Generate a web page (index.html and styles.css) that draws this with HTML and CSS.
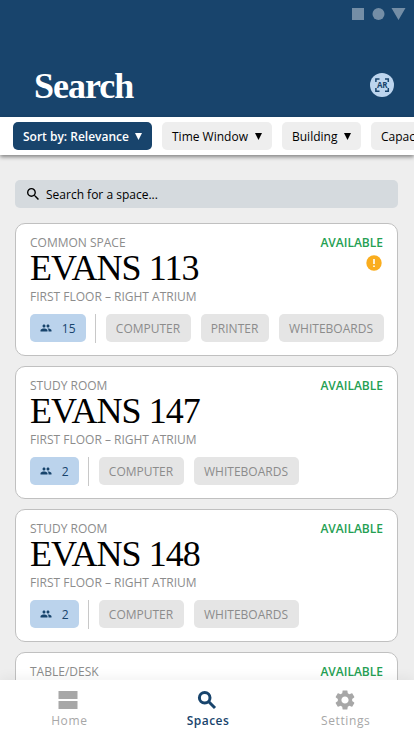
FILE: index.html
```html
<!DOCTYPE html>
<html lang="en">
<head>
<meta charset="utf-8">
<title>Search</title>
<link rel="stylesheet" href="styles.css">
</head>
<body>
<svg width="0" height="0" class="defs">
  <symbol id="people" viewBox="0 0 24 24"><path d="M16 11c1.660 0 3-1.340 3-3s-1.340-3-3-3-3 1.340-3 3 1.340 3 3 3zm-8 0c1.660 0 3-1.340 3-3S9.660 5 8 5 5 6.340 5 8s1.340 3 3 3zm0 2c-2.330 0-7 1.170-7 3.500V19h14v-2.500c0-2.330-4.670-3.500-7-3.500zm8 0c-.29 0-.62.02-.97.05 1.160.84 1.970 1.970 1.970 3.450V19h6v-2.500c0-2.330-4.670-3.500-7-3.500z"/></symbol>
  <symbol id="search" viewBox="3 3 17.500 17.500"><path d="M15.500 14h-.79l-.28-.27A6.471 6.471 0 0 0 16 9.500 6.500 6.500 0 1 0 9.500 16c1.610 0 3.090-.59 4.230-1.570l.27.28v.79l5 4.990L20.490 19l-4.990-5zm-6 0C7.010 14 5 11.990 5 9.500S7.010 5 9.500 5 14 7.010 14 9.500 11.990 14 9.500 14z"/></symbol>
</svg>
<div class="app">
  <header class="header">
    <svg class="status" viewBox="0 0 54 12"><path d="M0 0h12v12H0zM39.500 0h14l-7 12z"/><circle cx="26.500" cy="6" r="6"/></svg>
    <div class="title-row">
      <h1>Search</h1>
      <svg class="ar" viewBox="0 0 24 24"><circle class="ar-bg" cx="12" cy="12" r="12"/><path class="ar-frame" d="M5.900 9V5.900H9.500M15 5.900h3.300V9M5.900 15v3.200H9.500M15 18.200h3.300V15"/><text x="12.100" y="14.800" text-anchor="middle">AR</text></svg>
    </div>
  </header>
  <nav class="filters">
    <button class="filter active sort">Sort by: Relevance <svg viewBox="0 0 7 7"><path d="M0 0h7L3.500 7z"/></svg></button>
    <button class="filter time">Time Window <svg viewBox="0 0 7 7"><path d="M0 0h7L3.500 7z"/></svg></button>
    <button class="filter building">Building <svg viewBox="0 0 7 7"><path d="M0 0h7L3.500 7z"/></svg></button>
    <button class="filter capacity">Capacity <svg viewBox="0 0 7 7"><path d="M0 0h7L3.500 7z"/></svg></button>
  </nav>
  <main class="content">
    <div class="searchbar"><svg><use href="#search"/></svg><span>Search for a space...</span></div>
    <article class="card">
      <div class="top"><span>COMMON SPACE</span><b>AVAILABLE</b></div>
      <div class="name"><h2>EVANS 113</h2><svg class="alert" viewBox="0 0 16 16"><circle cx="8" cy="8" r="7.700"/><path d="M7.200 4h1.600v5H7.200zM7.200 10.400h1.600V12H7.200z"/></svg></div>
      <div class="place">FIRST FLOOR – RIGHT ATRIUM</div>
      <div class="tags"><span class="people wide"><svg><use href="#people"/></svg>15</span><i></i><span class="tag computer">COMPUTER</span><span class="tag printer">PRINTER</span><span class="tag boards">WHITEBOARDS</span></div>
    </article>
    <article class="card">
      <div class="top"><span>STUDY ROOM</span><b>AVAILABLE</b></div>
      <div class="name"><h2>EVANS 147</h2></div>
      <div class="place">FIRST FLOOR – RIGHT ATRIUM</div>
      <div class="tags"><span class="people"><svg><use href="#people"/></svg>2</span><i></i><span class="tag computer">COMPUTER</span><span class="tag boards">WHITEBOARDS</span></div>
    </article>
    <article class="card">
      <div class="top"><span>STUDY ROOM</span><b>AVAILABLE</b></div>
      <div class="name"><h2>EVANS 148</h2></div>
      <div class="place">FIRST FLOOR – RIGHT ATRIUM</div>
      <div class="tags"><span class="people"><svg><use href="#people"/></svg>2</span><i></i><span class="tag computer">COMPUTER</span><span class="tag boards">WHITEBOARDS</span></div>
    </article>
    <article class="card">
      <div class="top"><span>TABLE/DESK</span><b>AVAILABLE</b></div>
    </article>
  </main>
  <nav class="tabs">
    <a><svg viewBox="0 0 20 20"><path d="M.5 1h19v8H.5zM.5 11h19v8H.5z"/></svg>Home</a>
    <a class="current"><svg viewBox="0 0 20 20"><circle cx="7.700" cy="7.700" r="5.300"/><path d="M11.800 11.800l6.200 6.200"/></svg>Spaces</a>
    <a><svg viewBox="2 2 20 20"><path d="M19.140 12.940c.04-.3.06-.61.06-.94 0-.32-.02-.64-.07-.94l2.030-1.580c.18-.14.23-.41.12-.61l-1.920-3.320c-.12-.22-.37-.29-.59-.22l-2.390.96c-.5-.38-1.030-.7-1.620-.94l-.36-2.540c-.04-.24-.24-.41-.48-.41h-3.840c-.24 0-.43.17-.47.41l-.36 2.540c-.59.24-1.130.57-1.620.94l-2.390-.96c-.22-.08-.47 0-.59.22L2.740 8.870c-.12.21-.08.47.12.61l2.030 1.580c-.05.3-.09.63-.09.94s.02.64.07.94l-2.030 1.580c-.18.14-.23.41-.12.61l1.920 3.320c.12.22.37.29.59.22l2.390-.96c.5.38 1.030.7 1.620.94l.36 2.540c.05.24.24.41.48.41h3.840c.24 0 .44-.17.47-.41l.36-2.540c.59-.24 1.130-.56 1.620-.94l2.390.96c.22.08.47 0 .59-.22l1.920-3.320c.12-.22.07-.47-.12-.61l-2.010-1.580zM12 15.600c-1.980 0-3.600-1.620-3.600-3.600s1.620-3.600 3.600-3.600 3.600 1.620 3.600 3.600-1.620 3.600-3.600 3.600z"/></svg>Settings</a>
  </nav>
</div>
</body>
</html>
```
FILE: styles.css
```css
* { box-sizing: border-box; }
body { margin: 0; font: 12px/16px "Open Sans", sans-serif; color: #000; }
.defs { display: block; }
.app { width: 414px; height: 736px; overflow: hidden; background: #eee; display: flex; flex-direction: column; }
.header { flex: 0 0 117px; background: #18446c; padding: 8px 8px 0 34px; display: flex; flex-direction: column; }
.status { width: 54px; height: 12px; align-self: flex-end; fill: #748ea6; }
.title-row { display: flex; justify-content: space-between; padding: 45px 12px 0 0; }
h1 { margin: 0; font: bold 36px/42px "Liberation Serif", serif; letter-spacing: -1px; color: #fff; }
.ar { width: 24px; height: 24px; margin-top: 8px; }
.ar-bg { fill: #bdd5ee; }
.ar-frame { fill: none; stroke: #18446c; stroke-width: 1.500px; }
.ar text { font: bold 8px "Open Sans", sans-serif; letter-spacing: -.2px; fill: #18446c; }
.filters { position: relative; flex: 0 0 38px; background: #fff; padding: 5px 13px; display: flex; gap: 10px; box-shadow: 0 2px 4px rgba(0,0,0,.45); }
.filter { flex: none; height: 28px; border: 0; border-radius: 5px; background: #eee; padding: 0 10px; display: flex; align-items: center; justify-content: space-between; font: 12px "Open Sans", sans-serif; color: #000; white-space: nowrap; }
.filter svg { width: 7px; height: 7px; fill: currentColor; }
.active { background: #18446c; color: #fff; font-weight: 600; }
.sort { width: 139px; }
.time { width: 110px; }
.building { width: 79px; }
.capacity { width: 90px; }
.content { flex: 1; min-height: 0; overflow: hidden; padding: 25px 16px 0 15px; display: flex; flex-direction: column; gap: 10px; }
.searchbar { flex: 0 0 28px; margin-bottom: 5px; border-radius: 5px; background: #d5dade; display: flex; align-items: center; padding: 1px 12px 0; gap: 7px; }
.searchbar svg { width: 12px; height: 12px; margin-bottom: 2px; }
.card { flex: 0 0 133px; border: 1px solid #c0c0c0; border-radius: 10px; background: #fff; padding: 11px 14px 0; color: #8c8c8c; }
.top { display: flex; justify-content: space-between; height: 16px; }
.top b { color: #24a052; font-weight: 600; }
.name { display: flex; justify-content: space-between; height: 38px; }
h2 { margin: 0; font: 36px/35px "Liberation Serif", serif; letter-spacing: -.95px; color: #000; }
.alert { width: 16px; height: 16px; margin: 4px 1px 0 0; fill: #faad1e; }
.alert path { fill: #fff; }
.place { height: 16px; }
.tags { display: flex; margin-top: 9px; height: 28px; }
.tags i { flex: none; width: 1px; height: 29px; margin: 0 2.500px 0 9px; background: #c8c8c8; }
.people { flex: none; width: 49px; border-radius: 5px; background: #bbd3ec; color: #18446c; display: flex; align-items: center; justify-content: space-between; padding: 1px 10.500px 0 10px; }
.people.wide { width: 56px; }
.people svg { width: 12px; height: 12px; fill: #18446c; margin-bottom: 1px; }
.tag { height: 28px; border-radius: 5px; background: #e5e5e5; line-height: 29px; text-align: center; margin-right: 10px; flex: none; }
i + .tag { margin-left: 7px; }
.computer { width: 85px; }
.printer { width: 68px; }
.boards { width: 105px; margin-right: 0; }
.tabs { position: relative; flex: 0 0 56px; background: #fff; display: flex; box-shadow: 0 -2px 12px rgba(0,0,0,.06); }
.tabs a { flex: 1; display: flex; flex-direction: column; align-items: center; padding: 10px 0 0 1px; gap: 3px; color: #a7a7a7; letter-spacing: .6px; }
.tabs svg { width: 20px; height: 20px; fill: currentColor; margin-right: 2px; }
.tabs .current { color: #18446c; font-weight: 600; letter-spacing: .5px; padding-left: 2px; }
.tabs .current svg { fill: none; stroke: currentColor; stroke-width: 3px; }
```
